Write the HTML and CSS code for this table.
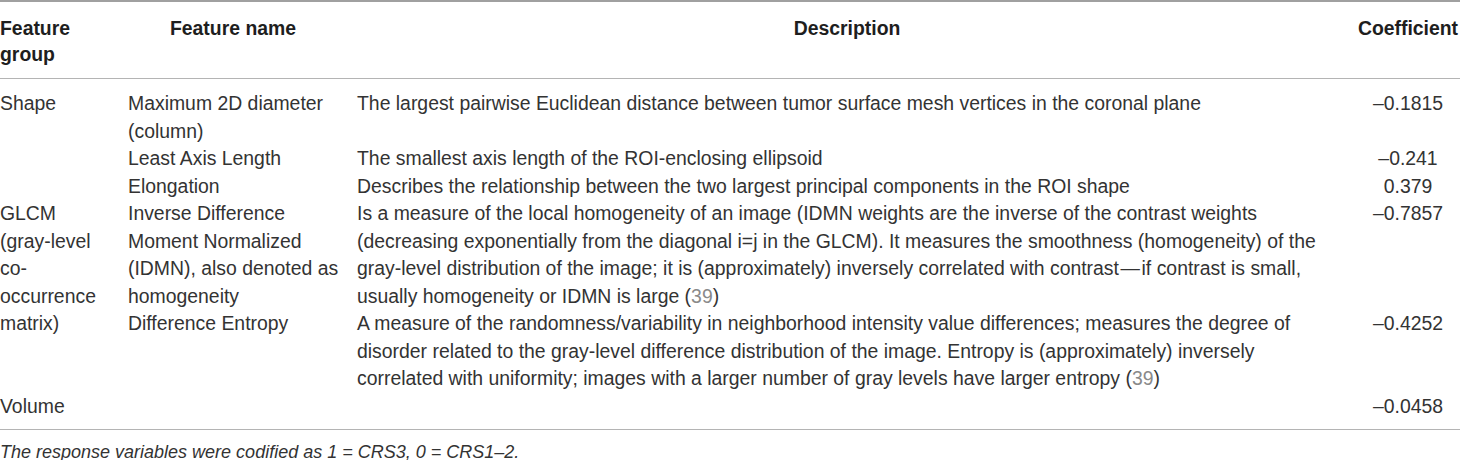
FILE: index.html
```html
<!DOCTYPE html>
<html lang="en">
<head>
<meta charset="utf-8">
<title>Table</title>
<link rel="stylesheet" href="styles.css">
</head>
<body>
<table class="tbl">
  <colgroup>
    <col class="c-group">
    <col class="c-name">
    <col class="c-desc">
    <col class="c-coef">
  </colgroup>
  <thead>
    <tr>
      <th class="left">Feature group</th>
      <th>Feature name</th>
      <th>Description</th>
      <th>Coefficient</th>
    </tr>
  </thead>
  <tbody>
    <tr class="first">
      <td rowspan="3">Shape</td>
      <td>Maximum 2D diameter (column)</td>
      <td>The largest pairwise Euclidean distance between tumor surface mesh vertices in the coronal plane</td>
      <td class="num">–0.1815</td>
    </tr>
    <tr>
      <td>Least Axis Length</td>
      <td>The smallest axis length of the ROI-enclosing ellipsoid</td>
      <td class="num">–0.241</td>
    </tr>
    <tr>
      <td>Elongation</td>
      <td>Describes the relationship between the two largest principal components in the ROI shape</td>
      <td class="num">0.379</td>
    </tr>
    <tr>
      <td rowspan="2">GLCM (gray-level co-occurrence matrix)</td>
      <td>Inverse Difference Moment Normalized (IDMN), also denoted as homogeneity</td>
      <td>Is a measure of the local homogeneity of an image (IDMN weights are the inverse of the contrast weights (decreasing exponentially from the diagonal i=j in the GLCM). It measures the smoothness (homogeneity) of the gray-level distribution of the image; it is (approximately) inversely correlated with contrast&#8202;—&#8202;if contrast is small, usually homogeneity or IDMN is large (<a class="ref">39</a>)</td>
      <td class="num">–0.7857</td>
    </tr>
    <tr>
      <td>Difference Entropy</td>
      <td>A measure of the randomness/variability in neighborhood intensity value differences; measures the degree of disorder related to the gray-level difference distribution of the image. Entropy is (approximately) inversely correlated with uniformity; images with a larger number of gray levels have larger entropy (<a class="ref">39</a>)</td>
      <td class="num">–0.4252</td>
    </tr>
    <tr class="last">
      <td>Volume</td>
      <td></td>
      <td></td>
      <td class="num">–0.0458</td>
    </tr>
  </tbody>
</table>
<p class="note">The response variables were codified as 1 = CRS3, 0 = CRS1–2.</p>
</body>
</html>
```

FILE: styles.css
```css
html, body {
  margin: 0;
  padding: 0;
  background: #ffffff;
}

body {
  font-family: "Liberation Sans", Arial, sans-serif;
  font-size: 19.4px;
  line-height: 27.5px;
  color: #333333;
}

.tbl {
  width: 1460px;
  border-collapse: collapse;
  table-layout: fixed;
  border-top: 2px solid #a0a0a0;
  border-bottom: 1px solid #b4b4b4;
}

.c-group { width: 128px; }
.c-name { width: 229px; }
.c-desc { width: 999px; }
.c-coef { width: 104px; }

.tbl th {
  font-weight: bold;
  color: #1e1e1e;
  text-align: center;
  vertical-align: top;
  padding: 13px 19px 11px 0;
  line-height: 26px;
  border-bottom: 1px solid #b4b4b4;
}

.tbl th.left {
  text-align: left;
}

.tbl th:last-child,
.tbl td:last-child {
  padding-right: 0;
}

.tbl td {
  vertical-align: top;
  text-align: left;
  padding: 0 19px 0 0;
}

.tbl td:first-child {
  padding-right: 26px;
}

.tbl td:nth-child(2) {
  padding-right: 14px;
}

.tbl td:nth-child(3) {
  padding-right: 30px;
}

.tbl tr.first td {
  padding-top: 11px;
}

.tbl tr.last td {
  padding-bottom: 9px;
}

.tbl td.num {
  text-align: center;
  padding-right: 0;
}

.ref {
  color: #8a8a8a;
  text-decoration: none;
}

.note {
  margin: 9px 0 0 0;
  font-style: italic;
  font-size: 18px;
  line-height: 27px;
}
```
